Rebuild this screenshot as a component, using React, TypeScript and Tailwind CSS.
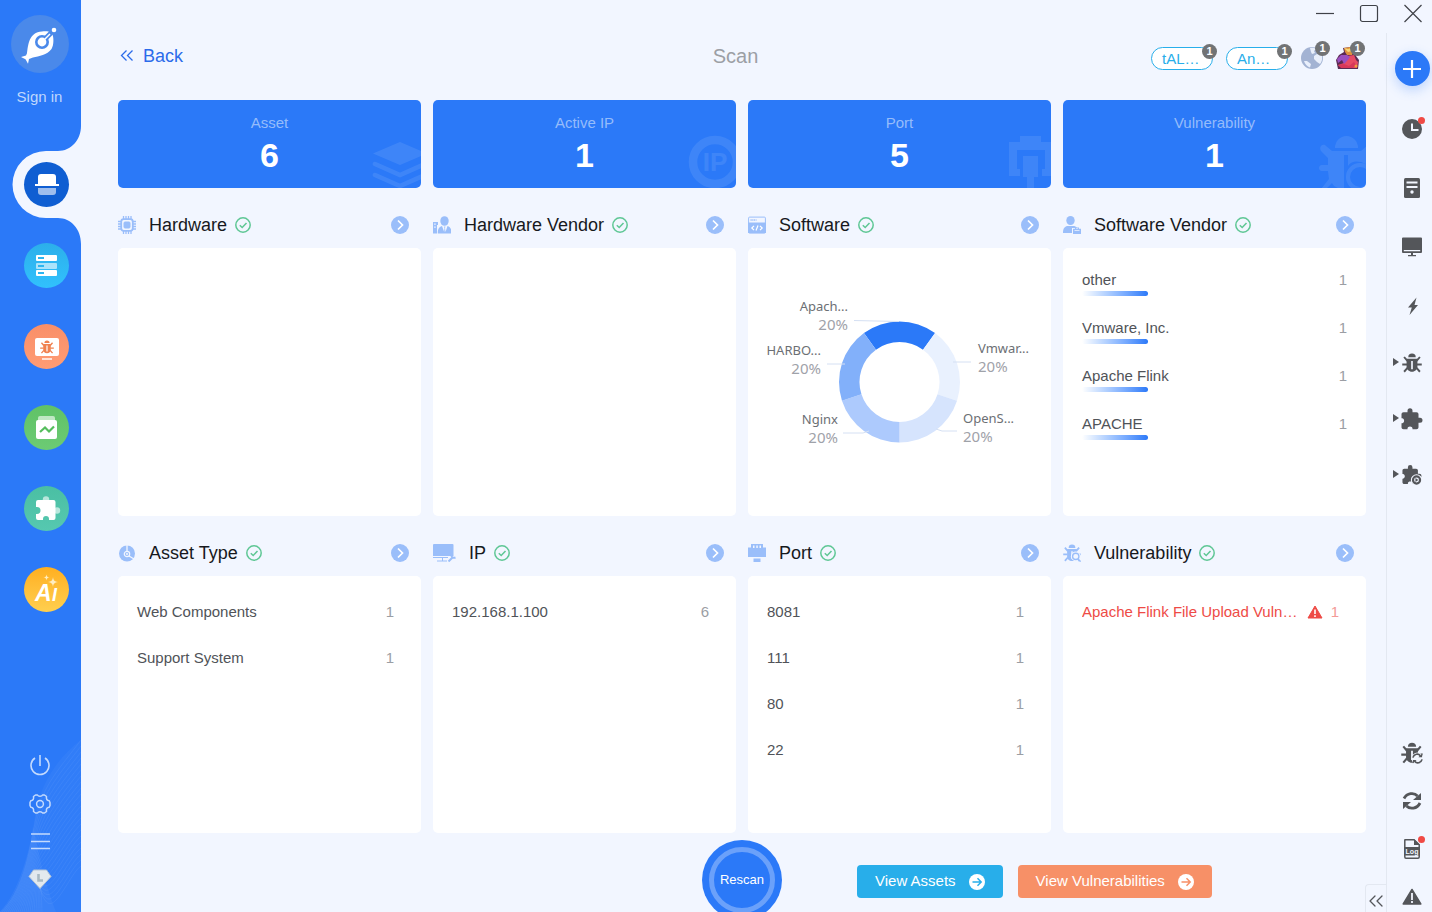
import type { ReactNode } from "react";
import { ChevronsLeft } from "lucide-react";

type IconProps = { className?: string };

const PUZZLE =
  "M20.5 10.500H19V7c0-1.1-.9-2-2-2h-4V3.5a2.5 2.5 0 0 0-5 0V5H4c-1.1 0-2 .9-2 2v4h.6c1.2 0 2 1.2 2 2.500s-.8 2.500-2 2.500H2v4c0 1.1.9 2 2 2h4v-.8c0-1.3 1.200-2 2.500-2s2.500.7 2.500 2v.8h4c1.1 0 2-.9 2-2v-4.500h1.5a2.5 2.5 0 0 0 0-5z";

function BugShape() {
  return (
    <>
      <path d="M7.5 5.2a4.500 4.500 0 0 1 9 0z" fill="currentColor" />
      <path
        fillRule="evenodd"
        fill="currentColor"
        d="M5.500 6.800h13v9.700c0 3.200-2.800 6-6.500 6s-6.500-2.800-6.500-6zM11 9.500v10h2v-10z"
      />
      <path
        d="M6.500 9.500 2.500 4.800M6 13.800H.3M6.600 17.800 2.500 22.500M17.500 9.500l4-4.700M18 13.800h5.700M17.400 17.800l4.100 4.700"
        stroke="currentColor"
        strokeWidth="2.300"
        fill="none"
      />
    </>
  );
}

function BugIcon({ className }: IconProps) {
  return (
    <svg viewBox="0 0 24 24" className={className}>
      <BugShape />
    </svg>
  );
}

function Logo() {
  return (
    <svg viewBox="0 0 58 58" className="size-[58px]">
      <circle cx="29" cy="29" r="29" fill="#4a89ea" />
      <path
        d="M16 39C17 30 18 17 31 16.500c4-.5 8 0 10 1.500 2 4 2 12-.5 16C36 40 28 41 22 42.500z"
        fill="#fff"
      />
      <path d="M10 42l5-1.500 1.500-3.500L22 42.500l-4 1.500-1 4.700-2.500-4.500z" fill="#fff" />
      <path d="M31 27L43 15" stroke="#4a89ea" strokeWidth="5" />
      <circle cx="31" cy="27" r="7" fill="#4a89ea" />
      <path d="M31 27l8-8" stroke="#fff" strokeWidth="1.5" />
      <circle cx="31" cy="27" r="4.4" fill="#fff" />
      <circle cx="43" cy="15" r="2.3" fill="#fff" />
    </svg>
  );
}

/* sidebar icons, drawn on a 45px disc */
const navItems: { label: string; disc: string; icon: ReactNode }[] = [
  {
    label: "Scan",
    disc: "bg-[#0f5ed2]",
    icon: (
      <>
        <path d="M14 22v-7a3 3 0 0 1 3-3h12a3 3 0 0 1 3 3v7z" fill="#fff" />
        <rect x="11" y="22" width="24" height="2" fill="#fff" />
        <path d="M14 26h18v4a3 3 0 0 1-3 3H17a3 3 0 0 1-3-3z" fill="#fff" opacity=".6" />
      </>
    ),
  },
  {
    label: "Assets",
    disc: "bg-linear-to-b from-[#2cafea] to-[#31c1fd]",
    icon: (
      <>
        <rect x="12" y="12" width="21" height="6" rx="1" fill="#fff" />
        <rect x="12" y="20" width="21" height="6" rx="1" fill="#fff" opacity=".6" />
        <rect x="12" y="27" width="21" height="6" rx="1" fill="#fff" />
        <path d="M14 15h6M14 23h6M14 30h6" stroke="#2db5f0" strokeWidth="2" />
      </>
    ),
  },
  {
    label: "Vulnerabilities",
    disc: "bg-linear-to-b from-[#f98f68] to-[#ff9c74]",
    icon: (
      <>
        <rect x="11" y="14" width="24" height="18" rx="2" fill="#fff" />
        <rect x="18" y="34" width="10" height="2" fill="#fff" opacity=".7" />
        <svg x="16" y="16" width="14" height="14" viewBox="0 0 24 24" className="text-[#f0814f]">
          <BugShape />
        </svg>
      </>
    ),
  },
  {
    label: "Reports",
    disc: "bg-linear-to-b from-[#60c266] to-[#6ccb74]",
    icon: (
      <>
        <path d="M14 15v-2a2 2 0 0 1 2-2h13a2 2 0 0 1 2 2v2z" fill="#fff" opacity=".6" />
        <rect x="12" y="15" width="21" height="19" rx="2" fill="#fff" />
        <path d="M16 27l5-4.500 4 4 5-5" stroke="#55bd5c" strokeWidth="2.2" fill="none" />
      </>
    ),
  },
  {
    label: "Extensions",
    disc: "bg-linear-to-b from-[#4abfa3] to-[#56c8b0]",
    icon: (
      <>
        <circle cx="22" cy="13.5" r="3.2" fill="#fff" opacity=".6" />
        <circle cx="33" cy="24.5" r="3.2" fill="#fff" opacity=".6" />
        <path
          d="M14 14h15.500a2 2 0 0 1 2 2v16a2 2 0 0 1-2 2H25v-1a3 3 0 0 0-6 0v1h-5a2 2 0 0 1-2-2v-4h1a3.500 3.500 0 0 0 0-7h-1v-5a2 2 0 0 1 2-2z"
          fill="#fff"
        />
      </>
    ),
  },
  {
    label: "AI",
    disc: "bg-linear-to-b from-[#ffaf1e] to-[#ffcf4e]",
    icon: (
      <>
        <text x="11" y="34" fontSize="23" fontStyle="italic" fontWeight="bold" fill="#fff">
          A
        </text>
        <text x="28" y="34" fontSize="18" fontStyle="italic" fontWeight="bold" fill="#fff">
          I
        </text>
        <path
          d="M29 10c.5 3.500 1.500 4.500 5 5-3.500.5-4.500 1.500-5 5-.5-3.500-1.500-4.500-5-5 3.500-.5 4.500-1.500 5-5zM22.500 7.500c.3 2 1 2.700 3 3-2 .3-2.700 1-3 3-.3-2-1-2.700-3-3 2-.3 2.700-1 3-3z"
          fill="#ffedc0"
        />
      </>
    ),
  },
];

function Sidebar() {
  return (
    <aside className="relative flex w-[81px] shrink-0 flex-col overflow-hidden bg-[#2b79f8]">
      <svg viewBox="0 0 81 182" className="absolute bottom-0 left-0 w-full" fill="none">
        <path d="M0 182C22 164 30 120 34 92c5-40 26-66 47-82v172z" fill="#fff" opacity=".03" />
        <path d="M0 182c20-18 29-56 33-86 7 36 15 66 23 86z" fill="#fff" opacity=".04" />
        {Array.from({ length: 22 }, (_, i) => (
          <path
            key={i}
            d={`M${i * 2} 182C${20 + i} ${162 - i} ${30 + i / 3} ${120 + i * 2} ${36 + i / 2} ${88 + i * 4}S${60 + i / 2} ${38 + i * 5} 81 ${10 + i * 6}`}
            stroke="#fff"
            strokeWidth=".5"
            opacity=".1"
          />
        ))}
      </svg>

      <div className="flex flex-col items-center pt-[15px] pr-[2px]">
        <Logo />
        <a href="#sign-in" className="mt-3 text-[15px] leading-6 text-[#bfd7fd]">
          Sign in
        </a>
      </div>

      <nav className="relative mt-[53px] flex flex-col gap-9 pl-6">
        {navItems.map((item, i) => (
          <button key={item.label} aria-label={item.label} className="relative size-[45px]">
            {i === 0 && (
              <svg viewBox="0 0 81 118" className="absolute -top-9 -left-6 h-[118px] w-[81px]">
                <path
                  d="M81 0c0 14-10 25-23 25H46a33.500 33.500 0 0 0 0 67h12c13 0 23 11 23 26z"
                  fill="#f2f6ff"
                />
              </svg>
            )}
            <span className={`relative block size-[45px] rounded-full ${item.disc}`}>
              <svg viewBox="0 0 45 45" className="size-[45px]">
                {item.icon}
              </svg>
            </span>
          </button>
        ))}
      </nav>

      <div className="relative mt-auto flex flex-col items-center gap-4 pr-[2px] pb-[22px] text-[#c4dafd]">
        <button aria-label="Exit">
          <svg viewBox="0 0 22 22" className="size-[22px]" fill="none" stroke="currentColor" strokeWidth="1.6">
            <path d="M11 1v11M6 4a9 9 0 1 0 10 0" />
          </svg>
        </button>
        <button aria-label="Settings">
          <svg viewBox="0 0 22 22" className="size-[22px]" fill="none" stroke="currentColor" strokeWidth="1.5">
            <circle cx="11" cy="12" r="3.4" />
            <path
              strokeLinejoin="round"
              d="M6.500 3h2c.8 1.800 4.200 1.800 5 0h2l2 1.500c-.5 2.500.5 4 2.700 4.300l.8 1.700v3l-.8 1.700c-2.200.3-3.200 1.800-2.700 4.300l-2 1.500h-2c-.8-1.800-4.200-1.800-5 0h-2l-2-1.500c.5-2.500-.5-4-2.700-4.300L1 13.500v-3l.8-1.700C4 8.500 5 7 4.500 4.500z"
            />
          </svg>
        </button>
        <button aria-label="Menu">
          <svg viewBox="0 0 22 22" className="size-[22px]" stroke="currentColor" strokeWidth="1.5">
            <path d="M2 4h19M2 11.500h19M2 18.500h19" />
          </svg>
        </button>
        <button aria-label="License">
          <svg viewBox="0 0 24 22" className="h-[22px] w-6">
            <path d="M5.500 2h13L23 8.500 12 20.500 1 8.500z" fill="#e3e9ee" stroke="#b4c3d4" />
            <path d="M10.500 6v6.500H15" fill="none" stroke="#a9b9c2" strokeWidth="2.6" />
          </svg>
        </button>
      </div>
    </aside>
  );
}

function TitleBar() {
  return (
    <div className="flex h-[33px] items-start justify-end gap-6 pt-[3px] pr-[9px] text-[#3f4248]">
      <button aria-label="Minimize">
        <svg viewBox="0 0 20 20" className="size-5" stroke="currentColor" strokeWidth="1.2">
          <path d="M1 10.500h18" />
        </svg>
      </button>
      <button aria-label="Maximize">
        <svg viewBox="0 0 20 20" className="size-5" fill="none" stroke="currentColor" strokeWidth="1.2">
          <rect x="1.500" y="2.500" width="17" height="16" rx="2" />
        </svg>
      </button>
      <button aria-label="Close">
        <svg viewBox="0 0 20 20" className="size-5" stroke="currentColor" strokeWidth="1.2">
          <path d="M1.500 2l17 17M18.500 2l-17 17" />
        </svg>
      </button>
    </div>
  );
}

function Badge({ className }: IconProps) {
  return (
    <span
      className={`absolute flex size-[15px] items-center justify-center rounded-full bg-[#717375] text-[11px] leading-none font-bold text-white ${className}`}
    >
      1
    </span>
  );
}

function Header() {
  return (
    <header className="mr-[5px] -ml-2 grid h-[46px] grid-cols-[1fr_auto_1fr] items-center">
      <a href="#back" className="flex items-center gap-[9px] pl-[10px] text-lg text-[#2b6bea]">
        <svg viewBox="0 0 14 14" className="size-[14px]" fill="none" stroke="currentColor" strokeWidth="1.3">
          <path d="M6.500 1.500 1.500 6.500l5 5M12.500 1.500l-5 5 5 5" />
        </svg>
        Back
      </a>
      <h1 className="text-xl text-[#9c9fa5]">Scan</h1>
      <div className="flex items-center justify-end gap-[13px] pt-1 pr-[2px]">
        {["tAL…", "An…"].map((name) => (
          <button
            key={name}
            className="relative h-[23px] w-[62px] rounded-full border border-[#28aeea] bg-white pl-[10px] text-left text-[15px] leading-[22px] text-[#28aeea]"
          >
            {name}
            <Badge className="-top-1 -right-[5px]" />
          </button>
        ))}
        <button aria-label="Proxy" className="relative size-[22px]">
          <svg viewBox="0 0 22 22" className="size-[22px]">
            <circle cx="11" cy="11" r="11" fill="#a3b3d3" />
            <path
              d="M9 1c3-.8 5 0 6 1l-2 2 1 2-3 1-1-2zM13 9l3-2 5 2c.5 4-.5 6-2 8l-3-2-3-3zM3 14l3 0 4 3-1 3.500C6 19.500 4 17 3 14z"
              fill="#e9effb"
            />
          </svg>
          <Badge className="-top-[6px] -right-[7px]" />
        </button>
        <button aria-label="Dragon" className="relative h-[22px] w-[23px]">
          <svg viewBox="0 0 23 22" className="h-[22px] w-[23px]">
            <path d="M0 13l3-5 5-3-1-4 8-1 4 3 1 6 3 4-1 9H2z" fill="#5b2a52" />
            <path d="M11 9l7-1 2 5 2 2-1 6H6l-4-3 6-2z" fill="#e84a64" />
            <path d="M1 12l4-4 6 0 3 2-3 4-3 3-2-4-4 3z" fill="#9a4fc0" />
            <path d="M8 1l6-1 4 3-2 5-5 0-2-3z" fill="#e0913f" />
            <path d="M8 1l4 1 3-1 1 3-4 1z" fill="#f7d774" />
            <path d="M2 18l6-1 5 2 5-4 2 3-3 3H5z" fill="#d8375a" />
            <circle cx="20" cy="19" r="1.500" fill="#f2a13c" />
          </svg>
          <Badge className="-top-[6px] -right-[6px]" />
        </button>
      </div>
    </header>
  );
}

/* faded drawings in the right corner of the stat cards */
const stats: { label: string; value: number; art: ReactNode }[] = [
  {
    label: "Asset",
    value: 6,
    art: (
      <>
        <path d="M33 8l27 11.500L33 31 6 19.500z" fill="#fff" />
        <path d="M8 30l25 11 25-11M8 41l25 11 25-11" fill="none" stroke="#fff" strokeWidth="4.5" strokeLinecap="round" />
      </>
    ),
  },
  {
    label: "Active IP",
    value: 1,
    art: (
      <>
        <circle cx="33" cy="28" r="22" fill="none" stroke="#fff" strokeWidth="8.5" />
        <text x="33" y="37" textAnchor="middle" fontSize="26" fontWeight="bold" fill="#fff">
          IP
        </text>
      </>
    ),
  },
  {
    label: "Port",
    value: 5,
    art: (
      <>
        <path d="M23 2h21v6h11v34H45v-7h3V16H20v19h3v7H12V8h11z" fill="#fff" />
        <path d="M26 22h15v21h-4v11h-7V43h-4z" fill="#fff" />
      </>
    ),
  },
  {
    label: "Vulnerability",
    value: 1,
    art: (
      <path
        fillRule="evenodd"
        d="M23 14a11.500 12 0 0 1 23 0zM9 12c2-2 4-1 5 0l6 5h29l6-5h5v5l-6 6v7c-9-5-16-2-18 2V21h-4v33H26c-3-1-5-3-6-5l-6 6H9l8-10-1-8h-6c-4 0-4-6 0-6h6v-7l-7-7c-1-2-1-4 0-5zM48 29a14 14 0 1 1 0 28 14 14 0 1 1 0-28zM48 33a10 10 0 1 0 0 20 10 10 0 1 0 0-20z"
        fill="#fff"
      />
    ),
  },
];

function Stats() {
  return (
    <div className="mt-[21px] grid grid-cols-4 gap-3">
      {stats.map((stat) => (
        <div
          key={stat.label}
          className="relative flex h-[88px] flex-col items-center overflow-hidden rounded-[5px] bg-[#2b79f8] pt-3"
        >
          <span className="text-[15px] leading-[22px] text-[#95bcfb]">{stat.label}</span>
          <span className="text-[34px] leading-[42px] font-bold text-white">{stat.value}</span>
          <svg viewBox="0 0 60 54" className="absolute -right-[6px] bottom-0 h-[54px] w-[60px] opacity-[0.09]">
            {stat.art}
          </svg>
        </div>
      ))}
    </div>
  );
}

function Panel({ title, icon, children }: { title: string; icon: ReactNode; children?: ReactNode }) {
  return (
    <section className="flex min-w-0 flex-col">
      <div className="flex h-[60px] items-center pt-[14px] pr-3 text-[#9abefa]">
        {icon}
        <h2 className="ml-[13px] text-lg text-[#17191d]">{title}</h2>
        <svg viewBox="0 0 16 16" className="ml-2 size-4" fill="none" stroke="#5fc795" strokeWidth="1.5">
          <circle cx="8" cy="8" r="7.2" />
          <path d="M4.800 8.200l2.400 2.300 4.300-4.600" />
        </svg>
        <button aria-label={`Open ${title}`} className="ml-auto">
          <svg viewBox="0 0 18 18" className="size-[18px]" fill="none">
            <circle cx="9" cy="9" r="9" fill="#9abefa" />
            <path d="M7 4.500 11.500 9 7 13.500" stroke="#fff" strokeWidth="1.7" />
          </svg>
        </button>
      </div>
      <div className="flex-1 overflow-hidden rounded-[5px] bg-white">{children}</div>
    </section>
  );
}

function Rows({ items }: { items: [string, number][] }) {
  return (
    <ul className="pt-[13px] pr-[27px] pl-[19px] text-[15px]">
      {items.map(([name, count]) => (
        <li key={name} className="flex h-[46px] items-center justify-between">
          <span className="text-[#505358]">{name}</span>
          <span className="text-[#9b9ea4]">{count}</span>
        </li>
      ))}
    </ul>
  );
}

const slices = [
  { name: "Apach...", color: "#2b79f8", x: 100, y: 63, anchor: "end", line: "M106 72.500l45 1" },
  { name: "Vmwar...", color: "#e9f1fe", x: 230, y: 105, anchor: "start", line: "M205 114h18" },
  { name: "OpenS...", color: "#d6e4fd", x: 215, y: 175, anchor: "start", line: "M188 181l6 2h15" },
  { name: "Nginx", color: "#adcafd", x: 90, y: 176, anchor: "end", line: "M95 185h20l6-2" },
  { name: "HARBO...", color: "#82b0fa", x: 73, y: 107, anchor: "end", line: "M79 116h18" },
] as const;

function arc(index: number) {
  const point = (r: number, deg: number) => {
    const a = ((deg - 90) * Math.PI) / 180;
    return `${151.5 + r * Math.cos(a)} ${134 + r * Math.sin(a)}`;
  };
  const from = index * 72 - 36;
  const to = from + 72;
  return `M${point(60.5, from)}A60.5 60.5 0 0 1 ${point(60.5, to)}L${point(40, to)}A40 40 0 0 0 ${point(40, from)}z`;
}

function SoftwareChart() {
  return (
    <svg viewBox="0 0 303 268" className="mx-auto h-[268px] max-w-full font-['Noto_Sans',sans-serif]">
      {slices.map((s, i) => (
        <g key={s.name}>
          <path d={arc(i)} fill={s.color} />
          <path d={s.line} stroke="#d5e0f3" fill="none" />
          <text x={s.x} y={s.y} textAnchor={s.anchor} fontSize="13" fill="#6c6f74">
            {s.name}
          </text>
          <text x={s.x} y={s.y + 19} textAnchor={s.anchor} fontSize="15" fill="#9fa2a9">
            20%
          </text>
        </g>
      ))}
    </svg>
  );
}

const vendors = ["other", "Vmware, Inc.", "Apache Flink", "APACHE"];

const icon = "size-[18px] shrink-0";

function Panels() {
  return (
    <>
      <div className="grid min-h-[328px] grid-cols-4 gap-3">
        <Panel
          title="Hardware"
          icon={
            <svg viewBox="0 0 18 18" className={icon} fill="none" stroke="currentColor">
              <rect x="3.200" y="3.200" width="11.600" height="11.600" rx="2.500" strokeWidth="1.8" />
              <rect x="6" y="6" width="6" height="6" rx="1" fill="currentColor" />
              <path
                d="M5.500 0v3M8 0v3M10.500 0v3M13 0v3M5.500 15v3M8 15v3M10.500 15v3M13 15v3M0 5.500h3M0 8h3M0 10.500h3M0 13h3M15 5.500h3M15 8h3M15 10.500h3M15 13h3"
                strokeWidth="1.3"
              />
            </svg>
          }
        />
        <Panel
          title="Hardware Vendor"
          icon={
            <svg viewBox="0 0 18 18" className={icon} fill="currentColor">
              <ellipse cx="11.500" cy="5" rx="4.200" ry="4.800" />
              <path fillRule="evenodd" d="M0 6h5v3H4v8.500H0zM1.200 7.500v1.200h1.500V7.500zM1.200 10.500v1.200h1.500v-1.200z" />
              <path d="M4.800 17.500c0-4.500 1-6.500 4.200-7.500l2.200 6 .3-4-.5-1.500h1.500l-.5 1.500.5 4 2-6c3 1 4 3 4 7.500z" />
            </svg>
          }
        />
        <Panel
          title="Software"
          icon={
            <svg viewBox="0 0 18 18" className={icon} fill="none" stroke="currentColor">
              <rect x=".6" y="1.100" width="16.800" height="16" rx="1" />
              <path d="M0 6.500h18V17H0z" fill="currentColor" stroke="none" />
              <path d="M2.500 4h6" strokeWidth="1.5" strokeDasharray="1.200 .6" />
              <path d="M6 9.800 3.800 12 6 14.200M12 9.800l2.200 2.200-2.200 2.200M10 9.500l-2 5" stroke="#fff" strokeWidth="1.2" />
            </svg>
          }
        >
          <SoftwareChart />
        </Panel>
        <Panel
          title="Software Vendor"
          icon={
            <svg viewBox="0 0 18 18" className={icon} fill="currentColor">
              <ellipse cx="7.500" cy="4.500" rx="4.200" ry="4.500" />
              <path d="M0 17c0-5 2-7 5-7h5c2 0 3 .5 4 2H9v5z" />
              <path fillRule="evenodd" d="M10 12.800h2v-1.300h4v1.300h2V18h-8zM13 12.500v.5h2v-.5zM11.500 14v.8h5V14z" />
            </svg>
          }
        >
          <ul className="flex flex-col gap-[21px] px-[19px] pt-[21px] text-[15px] leading-[22px]">
            {vendors.map((name) => (
              <li key={name}>
                <div className="flex justify-between">
                  <span className="text-[#505358]">{name}</span>
                  <span className="text-[#9b9ea4]">1</span>
                </div>
                <div className="h-[5px] w-[66px] rounded-full bg-linear-to-r from-white to-[#2b79f8]" />
              </li>
            ))}
          </ul>
        </Panel>
      </div>

      <div className="grid min-h-[317px] flex-1 grid-cols-4 gap-3">
        <Panel
          title="Asset Type"
          icon={
            <svg viewBox="0 0 18 18" className={icon} fill="none">
              <circle cx="9" cy="9.500" r="8" fill="currentColor" />
              <path d="M9 1v6M11 12l5 3" stroke="#f2f6ff" strokeWidth="1.3" />
              <circle cx="9" cy="10" r="2.700" stroke="#f2f6ff" strokeWidth="1.2" />
              <circle cx="9" cy="10" r="1" fill="#f2f6ff" />
            </svg>
          }
        >
          <Rows items={[["Web Components", 1], ["Support System", 1]]} />
        </Panel>
        <Panel
          title="IP"
          icon={
            <svg viewBox="0 0 23 18" className="h-[18px] w-[23px] shrink-0" fill="none" stroke="currentColor">
              <path d="M0 1a1 1 0 0 1 1-1h18.500a1 1 0 0 1 1 1v11H0z" fill="currentColor" stroke="none" />
              <path d="M0 13.500h15M9.500 14v3M4 17h10" />
              <path d="M15.500 17.500l4-4M18.500 10.500c-.5 2.500 1.500 4 4 3" strokeWidth="2" />
            </svg>
          }
        >
          <Rows items={[["192.168.1.100", 6]]} />
        </Panel>
        <Panel
          title="Port"
          icon={
            <svg viewBox="0 0 18 18" className={icon} fill="currentColor">
              <path
                fillRule="evenodd"
                d="M3 0h12v3.500h3V13H0V3.500h3zM5 1.500v2.500h1.500V1.500zM8.300 1.500v2.500h1.500V1.500zM11.500 1.500v2.500H13V1.500z"
              />
              <path d="M5.500 14.500h7V18h-7z" />
            </svg>
          }
        >
          <Rows items={[["8081", 1], ["111", 1], ["80", 1], ["22", 1]]} />
        </Panel>
        <Panel
          title="Vulnerability"
          icon={
            <svg viewBox="0 0 24 24" className={icon}>
              <BugShape />
              <circle cx="17" cy="16.500" r="6.500" fill="#f2f6ff" />
              <circle cx="17" cy="16.500" r="4.200" fill="none" stroke="currentColor" strokeWidth="1.8" />
              <path d="M20 20l3.500 3.500" stroke="currentColor" strokeWidth="2" />
            </svg>
          }
        >
          <ul className="pt-[13px] pr-[27px] pl-[19px] text-[15px]">
            <li className="flex h-[46px] items-center text-[#ee4b46]">
              <a href="#vulnerability" className="truncate">
                Apache Flink File Upload Vuln…
              </a>
              <svg viewBox="0 0 16 14" className="mr-2 ml-auto h-[14px] w-4 shrink-0">
                <path d="M8 1 15 13H1z" fill="currentColor" stroke="currentColor" strokeLinejoin="round" />
                <path d="M8 4.500V9M8 10.300V12" stroke="#fff" strokeWidth="1.6" />
              </svg>
              <span className="text-[#f39a97]">1</span>
            </li>
          </ul>
        </Panel>
      </div>
    </>
  );
}

function ActionButton({ label, className }: { label: string; className: string }) {
  return (
    <button
      className={`flex h-[33px] items-center gap-[13px] rounded px-[18px] text-[15px] whitespace-nowrap ${className}`}
    >
      <span className="text-white">{label}</span>
      <svg viewBox="0 0 16 16" className="size-4" fill="none">
        <circle cx="8" cy="8" r="8" fill="#fff" />
        <path d="M3.500 8H12M8.500 4.200 12.200 8l-3.700 3.800" stroke="currentColor" strokeWidth="1.5" />
      </svg>
    </button>
  );
}

function Footer() {
  return (
    <footer className="grid h-[79px] grid-cols-[1fr_auto_1fr] overflow-hidden">
      <button className="col-start-2 mt-[7px] flex size-20 items-center justify-center rounded-full bg-[#2b79f8] text-[13px] text-white">
        <span className="flex size-[66px] items-center justify-center rounded-full border-[5px] border-[#6ba1fa]">
          Rescan
        </span>
      </button>
      <div className="flex gap-[15px] pt-8 pl-[75px]">
        <ActionButton label="View Assets" className="bg-[#28aeea] text-[#28aeea]" />
        <ActionButton label="View Vulnerabilities" className="bg-[#f79067] text-[#f79067]" />
      </div>
    </footer>
  );
}

function Dot({ className }: IconProps) {
  return <span className={`absolute size-[7px] rounded-full bg-[#f04a45] ${className}`} />;
}

function Caret() {
  return (
    <svg viewBox="0 0 6 10" className="absolute top-1 -left-[9px] h-[10px] w-[6px]">
      <path d="M0 1v8l6-4z" fill="currentColor" />
    </svg>
  );
}

function Tool({ label, children }: { label: string; children: ReactNode }) {
  return (
    <button aria-label={label} className="relative flex size-5 items-center justify-center">
      {children}
    </button>
  );
}

function ToolRail() {
  return (
    <aside className="flex w-[46px] shrink-0 flex-col items-center border-l border-[#e3e8f1] pl-[5px] text-[#54565a]">
      <button
        aria-label="New scan"
        className="mt-[18px] flex size-[35px] items-center justify-center rounded-full bg-[#2b79f8] shadow-[0_4px_12px_#2b79f844]"
      >
        <svg viewBox="0 0 20 20" className="size-5">
          <path d="M10 1v18M1 10h18" stroke="#fff" strokeWidth="2.2" />
        </svg>
      </button>

      <div className="mt-[33px] flex flex-col gap-[39px]">
        <Tool label="History">
          <svg viewBox="0 0 20 20" className="size-5">
            <circle cx="10" cy="10" r="10" fill="currentColor" />
            <path d="M10 4.500V11h6.500" stroke="#f2f6ff" strokeWidth="2" fill="none" />
          </svg>
          <Dot className="-top-[2px] -right-[3px]" />
        </Tool>
        <Tool label="Servers">
          <svg viewBox="0 0 16 20" className="h-5 w-4">
            <rect width="16" height="20" rx="1.500" fill="currentColor" />
            <path d="M2.500 4.500h11M2.500 9h11" stroke="#f2f6ff" strokeWidth="1.8" />
            <circle cx="8" cy="14" r="1.700" fill="#f2f6ff" />
          </svg>
        </Tool>
        <Tool label="Monitor">
          <svg viewBox="0 0 20 20" className="size-5" fill="currentColor">
            <path
              fillRule="evenodd"
              d="M1 .5h18a1 1 0 0 1 1 1V15a1 1 0 0 1-1 1H1a1 1 0 0 1-1-1V1.500a1 1 0 0 1 1-1zM1.800 13v1.300h16.400V13z"
            />
            <path d="M9 16h2v2h3v1.300H6V18h3z" />
          </svg>
        </Tool>
        <Tool label="Quick scan">
          <svg viewBox="0 0 20 20" className="size-5">
            <path d="M14.500 1.500 6 11.500h3.800L7.500 19l8.500-10h-3.500z" fill="currentColor" />
          </svg>
        </Tool>
      </div>

      <div className="mt-[37px] flex flex-col gap-9">
        <Tool label="Vulnerability scan">
          <Caret />
          <BugIcon className="size-5" />
        </Tool>
        <Tool label="Plugins">
          <Caret />
          <svg viewBox="1.500 1 22 21.500" className="size-[22px] shrink-0">
            <path d={PUZZLE} fill="currentColor" />
          </svg>
        </Tool>
        <Tool label="Run plugin">
          <Caret />
          <svg viewBox="1.500 1 22 22" className="size-5">
            <path d={PUZZLE} fill="currentColor" />
            <circle cx="17.500" cy="17.500" r="6.300" fill="#f2f6ff" />
            <circle cx="17.500" cy="17.500" r="3.900" fill="#f2f6ff" stroke="currentColor" strokeWidth="2.400" />
            <path d="M16.300 15.300v4.400l3.200-2.200z" fill="currentColor" />
          </svg>
        </Tool>
      </div>

      <div className="mt-auto flex flex-col gap-7 pt-7 pb-[5px]">
        <Tool label="Update vulnerabilities">
          <svg viewBox="0 0 24 24" className="size-[22px] shrink-0">
            <BugShape />
            <circle cx="18" cy="18" r="6.500" fill="#f2f6ff" />
            <path d="M13 17c1-4 6-5 8-2M23 19c-1 4-6 5-8 2" fill="none" stroke="currentColor" strokeWidth="1.8" />
            <path d="M23 12.500v4h-4zM13 23.500v-4h4z" fill="currentColor" />
          </svg>
        </Tool>
        <Tool label="Refresh">
          <svg viewBox="0 0 20 20" className="size-5">
            <path
              d="M2 7.500C5 2 12 1 15.500 5M18 12C15 18 8 18.500 4.500 15"
              fill="none"
              stroke="currentColor"
              strokeWidth="2.8"
            />
            <path d="M19 2v7h-8zM1 18v-7h8z" fill="currentColor" />
          </svg>
        </Tool>
        <Tool label="Log">
          <svg viewBox="0 0 18 20" className="h-5 w-[18px]">
            <path
              d="M2 .8h9l5.200 5V18a1.200 1.200 0 0 1-1.200 1.200H3A1.200 1.200 0 0 1 1.800 18V1z"
              fill="none"
              stroke="currentColor"
              strokeWidth="1.5"
            />
            <path d="M11 0v6h6z" fill="currentColor" />
            <rect x="1" y="8" width="16" height="8.500" fill="currentColor" />
            <text x="9" y="14.500" textAnchor="middle" fontSize="7" fontWeight="bold" fill="#f2f6ff">
              Log
            </text>
          </svg>
          <Dot className="-top-[3px] -right-[3px]" />
        </Tool>
        <Tool label="Warnings">
          <svg viewBox="0 0 20 18" className="h-[18px] w-5">
            <path
              d="M10 1.500 18.800 16H1.200z"
              fill="currentColor"
              stroke="currentColor"
              strokeWidth="1.5"
              strokeLinejoin="round"
            />
            <path d="M10 5v7M10 13v2" stroke="#f2f6ff" strokeWidth="1.8" />
          </svg>
        </Tool>
      </div>
    </aside>
  );
}

export default function App() {
  return (
    <div className="flex min-h-screen bg-[#f2f6ff] font-['Liberation_Sans',Arial,sans-serif]">
      <Sidebar />
      <div className="flex min-w-0 flex-1 flex-col">
        <TitleBar />
        <div className="flex flex-1">
          <main className="relative flex min-w-0 flex-1 flex-col pr-5 pl-[37px]">
            <Header />
            <Stats />
            <Panels />
            <Footer />
            <button
              aria-label="Collapse"
              className="absolute right-0 bottom-0 flex h-7 w-[21px] items-center justify-center rounded-tl border-t border-l border-[#e3e8f1] pt-1 text-[#54565a]"
            >
              <ChevronsLeft className="size-6 shrink-0" strokeWidth={1.3} />
            </button>
          </main>
          <ToolRail />
        </div>
      </div>
    </div>
  );
}
